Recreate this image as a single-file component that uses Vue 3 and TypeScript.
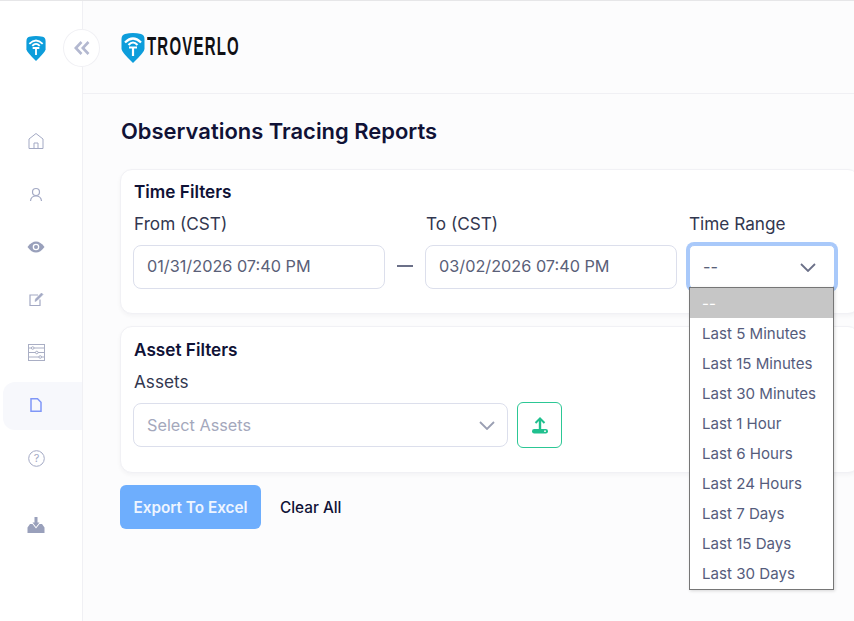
<script setup lang="ts">
const ranges: string[] = ['Last 5 Minutes','Last 15 Minutes','Last 30 Minutes','Last 1 Hour','Last 6 Hours','Last 24 Hours','Last 7 Days','Last 15 Days','Last 30 Days']
</script>

<template>
  <div class="app">
    <aside class="sidebar">
      <div class="side-logo">
        <svg width="20" height="26" viewBox="0 0 24 31"><path d="M.5 7Q.5 3 4 2Q12 0 20 2Q23.500 3 23.500 7V17Q23.500 20 12 31Q.5 20 .5 17Z" fill="#0d9ddb"/><path d="M4 10.500Q12 2.500 20 10.500M7.500 13Q12 8 16.500 13" fill="none" stroke="#fff" stroke-width="2.200"/><path d="M8 15.500H16M12 15.500V24" stroke="#fff" stroke-width="2.200" fill="none"/></svg>
      </div>
      <nav class="nav">
        <a class="item"><svg width="18" height="18" viewBox="0 0 18 18" fill="none" stroke="#a3a9c4" stroke-width="1"><path d="M2 16.500V7L9 1.500 16 7V16.500ZM7 16.500V11H11V16.500"/></svg></a>
        <a class="item user"><svg width="14" height="16" viewBox="0 0 14 16" fill="none" stroke="#a3a9c4" stroke-width="1.200"><circle cx="7" cy="5" r="3.500"/><path d="M1.500 14Q2 9 7 9T12.500 14"/></svg></a>
        <a class="item"><svg width="18" height="12" viewBox="0 0 18 12"><path d="M0.500 6Q4.500 0.500 9 0.500T17.500 6Q13.500 11.500 9 11.500T0.500 6Z" fill="#99a0bb"/><circle cx="9" cy="6" r="3.300" fill="#fff"/><circle cx="9" cy="6" r="2" fill="#99a0bb"/></svg></a>
        <a class="item"><svg width="15" height="15" viewBox="0 0 15 15" fill="none" stroke="#a3a9c4" stroke-width="1.200"><path d="M9 3H1V13.500H11V7.500"/><path d="M6 9.500L6.500 7 12.500 1 14 2.500 8 8.500Z" fill="#a3a9c4" stroke-width=".6"/></svg></a>
        <a class="item"><svg width="17" height="17" viewBox="0 0 17 17" fill="none" stroke="#a9aec4" stroke-width="1"><rect x=".5" y=".5" width="16" height="16"/><path d="M1 4H3.500M6 4H16M1 8.500H7.500M10 8.500H16M1 13H11M13.500 13H16"/><circle cx="4.700" cy="4" r="1.300"/><circle cx="8.800" cy="8.500" r="1.300"/><circle cx="12.200" cy="13" r="1.300"/></svg></a>
        <a class="item active"><svg width="12" height="14" viewBox="0 0 12 14" fill="none" stroke="#8097f7" stroke-width="1.500"><path d="M1 .8H7.500L11 4.300V13.200H1Z"/></svg></a>
        <a class="item"><svg width="17" height="17" viewBox="0 0 17 17" fill="none"><circle cx="8.500" cy="8.500" r="7.800" stroke="#a3a9c4"/><text x="8.500" y="12.200" text-anchor="middle" class="q">?</text></svg></a>
        <a class="item download"><svg width="18" height="16" viewBox="0 0 18 16"><path d="M0.500 16V10.500L3 7H5.500L9 11.500 12.500 7H15L17.500 10.500V16Z" fill="#99a0bb"/><path d="M7.500 0H10.500V5.500H12.500L9 10 5.500 5.500H7.500Z" fill="#99a0bb"/></svg></a>
      </nav>
    </aside>
    <button class="collapse" type="button" aria-label="Collapse sidebar">
      <svg width="16" height="14" viewBox="0 0 16 14" fill="none" stroke="#b3b8d0" stroke-width="2.600"><path d="M7.500 1L1.800 7 7.500 13M14.500 1L8.800 7 14.500 13"/></svg>
    </button>
    <div class="main">
      <header class="topbar">
        <svg width="24" height="31" viewBox="0 0 24 31"><path d="M.5 7Q.5 3 4 2Q12 0 20 2Q23.500 3 23.500 7V17Q23.500 20 12 31Q.5 20 .5 17Z" fill="#0d9ddb"/><path d="M4 10.500Q12 2.500 20 10.500M7.500 13Q12 8 16.500 13" fill="none" stroke="#fff" stroke-width="2.200"/><path d="M8 15.500H16M12 15.500V24" stroke="#fff" stroke-width="2.200" fill="none"/></svg>
        <span class="brand"><span class="brand-text">TROVERLO</span></span>
      </header>
      <main class="content">
        <h1>Observations Tracing Reports</h1>
        <section class="card time">
          <h2>Time Filters</h2>
          <div class="fields">
            <div class="field">
              <label>From (CST)</label>
              <div class="input date">01/31/2026 07:40 PM</div>
            </div>
            <div class="dash"></div>
            <div class="field">
              <label>To (CST)</label>
              <div class="input date">03/02/2026 07:40 PM</div>
            </div>
            <div class="field range">
              <label>Time Range</label>
              <div class="input select focused">
                <span>--</span>
                <svg width="16" height="9" viewBox="0 0 16 9" fill="none" stroke="#6b7088" stroke-width="1.800"><path d="M1 1L8 8 15 1"/></svg>
              </div>
              <ul class="menu">
                <li class="selected">--</li>
                <li v-for="r in ranges" :key="r">{{ r }}</li>
              </ul>
            </div>
          </div>
        </section>
        <section class="card assets">
          <h2>Asset Filters</h2>
          <label>Assets</label>
          <div class="asset-row">
            <div class="input select wide">
              <span class="placeholder">Select Assets</span>
              <svg width="16" height="9" viewBox="0 0 16 9" fill="none" stroke="#9a9fb3" stroke-width="1.800"><path d="M1 1L8 8 15 1"/></svg>
            </div>
            <button class="upload" type="button" aria-label="Upload">
              <svg width="16" height="17" viewBox="0 0 16 17" fill="none"><path d="M3.500 6L8 1.500 12.500 6" stroke="#1fc08e" stroke-width="2"/><path d="M8 2V12" stroke="#1fc08e" stroke-width="2.400"/><rect x="0" y="12" width="16" height="4.500" rx="2.200" fill="#1fc08e"/><circle cx="13" cy="14.200" r=".9" fill="#fff"/></svg>
            </button>
          </div>
        </section>
        <div class="actions">
          <button class="export" type="button">Export To Excel</button>
          <button class="clear" type="button">Clear All</button>
        </div>
      </main>
    </div>
  </div>
</template>

<style>
html, body { margin: 0; overflow: hidden; background: #fcfcfd; }
</style>

<style scoped>
.app { position: relative; display: flex; width: 854px; height: 621px; overflow: hidden; font-family: Inter, "Liberation Sans", sans-serif; border-top: 1px solid #e6e6e8; box-sizing: border-box; background: #fcfcfd; }
.sidebar { flex: 0 0 83px; box-sizing: border-box; width: 83px; background: #fff; border-right: 1px solid #f0f0f4; }
.side-logo { padding-top: 34px; padding-left: 26px; line-height: 0; height: 27px; }
.nav { display: flex; flex-direction: column; margin-top: 52px; padding-left: 3px; }
.item { display: flex; align-items: center; justify-content: center; height: 53px; padding-right: 13px; box-sizing: border-box; }
.item.user { padding-top: 2px; }
.item.active { height: 48px; margin: 2.500px 0; padding-bottom: 2px; background: #f7f8fc; border-radius: 12px 0 0 12px; }
.item.download { margin-top: 13px; }
.q { font: 400 11px Inter, sans-serif; fill: #a3a9c4; }
.collapse { position: absolute; left: 63px; top: 28px; width: 37px; height: 38px; padding: 0; display: flex; align-items: center; justify-content: center; border: 1px solid #f0f0f4; border-radius: 50%; background: #fff; }
.main { flex: 1 1 auto; min-width: 0; }
.topbar { height: 93px; box-sizing: border-box; border-bottom: 1px solid #f0f0f4; display: flex; align-items: flex-start; padding: 31px 0 0 38px; }
.brand { display: block; margin-left: 2px; height: 31px; width: 92px; }
.brand-text { display: inline-block; font: 700 25px/29px "Liberation Sans", sans-serif; letter-spacing: 2px; color: #101014; transform: scaleX(.6); transform-origin: left center; white-space: nowrap; }
.content { padding: 22px 0 0 37px; width: 760px; }
h1 { margin: 0 0 23px; padding-left: 1px; font-size: 21.95px; line-height: 30px; font-weight: 600; color: #101236; white-space: nowrap; }
.card { box-sizing: border-box; width: 740px; background: #fff; border: 1px solid #f1f1f5; border-radius: 12px; box-shadow: 0 2px 4px rgba(20, 20, 60, .04); padding: 12px 12px; }
.card.time { height: 145px; }
.card.assets { height: 147px; margin-top: 12px; padding-top: 13px; }
h2 { margin: 0; padding-left: 1px; font-size: 17.2px; line-height: 20px; font-weight: 600; color: #101236; }
label { display: block; padding-left: 1px; font-size: 17.2px; line-height: 20px; color: #32374f; }
.fields { display: flex; align-items: flex-end; margin-top: 10px; }
.field { position: relative; width: 252px; }
.field label { margin-bottom: 11px; margin-top: 2px; }
.range label { padding-left: 0; }
.dash { width: 16px; height: 2px; margin: 0 12px 22px; background: #6b7088; }
.range { margin-left: 12px; width: 146px; }
.input { box-sizing: border-box; height: 44px; display: flex; align-items: center; padding: 0 13px; background: #fff; border: 1px solid #dcdfec; border-radius: 8px; font-size: 16.25px; color: #5a6078; }
.date { padding-bottom: 2px; }
.select { justify-content: space-between; }
.focused { border: 1px solid #a9c9fa; box-shadow: 0 0 0 3px #a9c9fa; border-radius: 5px; padding-right: 18px; }
.menu { position: absolute; z-index: 2; left: 0; top: 75px; box-sizing: border-box; width: 145px; margin: 0; padding: 0 0 1px; list-style: none; background: #fff; border: 1px solid #767676; box-shadow: 1px 1px 3px rgba(0,0,0,.15); }
.menu li { height: 30px; line-height: 31px; padding-left: 12px; font-size: 15.1px; color: #555c7c; white-space: nowrap; }
.menu li.selected { background: #c6c6c6; color: #fff; }
.assets label { margin-top: 12px; margin-bottom: 10px; }
.asset-row { display: flex; align-items: center; gap: 9px; }
.wide { width: 375px; padding-right: 12px; }
.placeholder { color: #a4a8bc; }
.upload { width: 45px; height: 46px; padding: 0; display: flex; align-items: center; justify-content: center; background: #fff; border: 1px solid #2cc795; border-radius: 6px; }
.actions { display: flex; align-items: center; margin-top: 12px; }
.export { width: 141px; height: 44px; padding: 0; border: 0; border-radius: 6px; background: #6eaefd; color: #eef5ff; font: 600 15.3px Inter, sans-serif; }
.clear { margin-left: 19px; padding: 0; border: 0; background: none; color: #101236; font: 500 15.3px Inter, sans-serif; }
</style>
